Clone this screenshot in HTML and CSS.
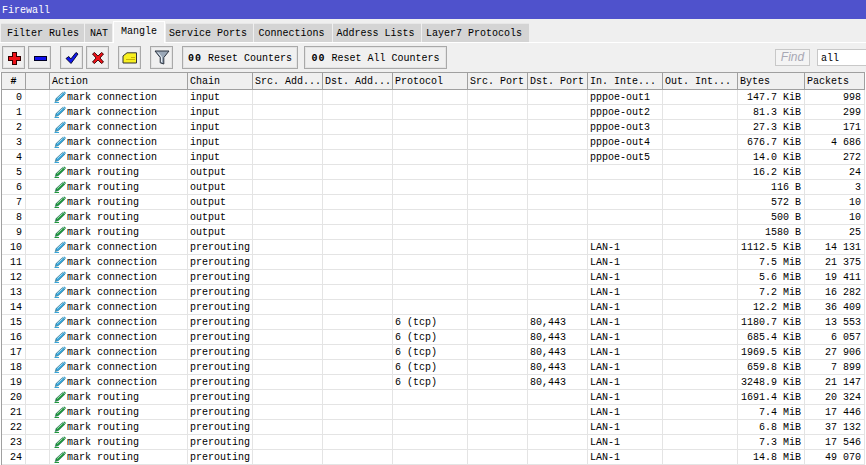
FILE: index.html
```html
<!DOCTYPE html>
<html lang="en">
<head>
<meta charset="utf-8">
<title>Firewall</title>
<link rel="stylesheet" href="styles.css">
</head>
<body>
<svg class="sprite" width="0" height="0" aria-hidden="true">
  <symbol id="pen" viewBox="0 0 14 12">
    <path d="M1.5 11.5 H6" stroke="currentColor" stroke-width="1"/>
    <path d="M2.2 10.6 L3 7.6 L9.6 1.4 L12 3.2 L5.2 9.8 Z" fill="currentColor" stroke="#0b3d4a" stroke-opacity=".55" stroke-width=".7"/>
    <path d="M4.2 7.6 L9.6 2.6" stroke="#fff" stroke-opacity=".6" stroke-width="1" fill="none"/>
    <path d="M10.2 1 L11.4 .6 L13 1.9 L12.4 3 Z" fill="currentColor"/>
  </symbol>
</svg>
<header class="titlebar">Firewall</header>
<nav class="tabs">
  <span class="tab t1">Filter Rules</span>
  <span class="tab t2">NAT</span>
  <span class="tab active t3">Mangle</span>
  <span class="tab t4">Service Ports</span>
  <span class="tab t5">Connections</span>
  <span class="tab t6">Address Lists</span>
  <span class="tab t7">Layer7 Protocols</span>
</nav>
<div class="toolbar">
  <button class="btn icon"><svg class="crisp" width="14" height="14" viewBox="0 0 14 14"><path d="M5 1 H9 V5 H13 V9 H9 V13 H5 V9 H1 V5 H5 Z" fill="#ee1118" stroke="#300" stroke-width="1"/></svg></button>
  <button class="btn icon gap-s"><svg class="crisp" width="14" height="14" viewBox="0 0 14 14"><rect x="1" y="5" width="12" height="4" fill="#1010ee" stroke="#002" stroke-width="1"/></svg></button>
  <button class="btn icon gap-l"><svg width="14" height="14" viewBox="0 0 14 14"><path d="M1 7.5 L3.8 5.5 L5.8 8 L11 1.5 L13 3 L6 12.5 Z" fill="#1018ee" stroke="#002" stroke-width=".9"/></svg></button>
  <button class="btn icon gap-s"><svg width="14" height="14" viewBox="0 0 14 14"><path d="M1.5 3 L3.5 1.5 L7 5 L10.5 1.5 L12.5 3 L9 7 L12.5 11 L10.5 12.5 L7 9 L3.5 12.5 L1.5 11 L5 7 Z" fill="#ee1118" stroke="#300" stroke-width=".9"/></svg></button>
  <button class="btn icon gap-l"><svg width="16" height="12" viewBox="0 0 16 12"><path d="M1 4 L5 .8 H14.5 V11 H1 Z" fill="#f8f020" stroke="#333" stroke-width="1"/><path d="M9 5.5 H13 M4 7.5 H13" stroke="#c9b400" stroke-width="1"/></svg></button>
  <button class="btn icon gap-l"><svg width="16" height="15" viewBox="0 0 16 15"><path d="M1 1 H15 L9.8 7.5 V14 L6.2 12.8 V7.5 Z" fill="#9aa8b8" stroke="#2c3440" stroke-width="1"/><path d="M4 2.5 L7.5 7 V12" stroke="#e6ecf2" stroke-width="1" fill="none"/></svg></button>
  <button class="btn text gap-l reset1"><b>00</b> Reset Counters</button>
  <button class="btn text gap-m reset2"><b>00</b> Reset All Counters</button>
  <span class="find">Find</span>
  <span class="filter">all</span>
</div>
<table class="rules">
  <colgroup>
    <col class="c24"><col class="c24"><col class="c138"><col class="c65"><col class="c70"><col class="c70"><col class="c75"><col class="c60"><col class="c60"><col class="c75"><col class="c75"><col class="c67"><col class="c60">
  </colgroup>
  <thead>
    <tr><th class="hash">#</th><th></th><th>Action</th><th>Chain</th><th>Src. Add...</th><th>Dst. Add...</th><th>Protocol</th><th>Src. Port</th><th>Dst. Port</th><th>In. Inte...</th><th>Out. Int...</th><th>Bytes</th><th>Packets</th></tr>
  </thead>
  <tbody>
    <tr><td class="r">0</td><td></td><td><svg class="pen conn"><use href="#pen"/></svg>mark connection</td><td>input</td><td></td><td></td><td></td><td></td><td></td><td>pppoe-out1</td><td></td><td class="r">147.7 KiB</td><td class="r">998</td></tr>
    <tr><td class="r">1</td><td></td><td><svg class="pen conn"><use href="#pen"/></svg>mark connection</td><td>input</td><td></td><td></td><td></td><td></td><td></td><td>pppoe-out2</td><td></td><td class="r">81.3 KiB</td><td class="r">299</td></tr>
    <tr><td class="r">2</td><td></td><td><svg class="pen conn"><use href="#pen"/></svg>mark connection</td><td>input</td><td></td><td></td><td></td><td></td><td></td><td>pppoe-out3</td><td></td><td class="r">27.3 KiB</td><td class="r">171</td></tr>
    <tr><td class="r">3</td><td></td><td><svg class="pen conn"><use href="#pen"/></svg>mark connection</td><td>input</td><td></td><td></td><td></td><td></td><td></td><td>pppoe-out4</td><td></td><td class="r">676.7 KiB</td><td class="r">4 686</td></tr>
    <tr><td class="r">4</td><td></td><td><svg class="pen conn"><use href="#pen"/></svg>mark connection</td><td>input</td><td></td><td></td><td></td><td></td><td></td><td>pppoe-out5</td><td></td><td class="r">14.0 KiB</td><td class="r">272</td></tr>
    <tr><td class="r">5</td><td></td><td><svg class="pen rout"><use href="#pen"/></svg>mark routing</td><td>output</td><td></td><td></td><td></td><td></td><td></td><td></td><td></td><td class="r">16.2 KiB</td><td class="r">24</td></tr>
    <tr><td class="r">6</td><td></td><td><svg class="pen rout"><use href="#pen"/></svg>mark routing</td><td>output</td><td></td><td></td><td></td><td></td><td></td><td></td><td></td><td class="r">116 B</td><td class="r">3</td></tr>
    <tr><td class="r">7</td><td></td><td><svg class="pen rout"><use href="#pen"/></svg>mark routing</td><td>output</td><td></td><td></td><td></td><td></td><td></td><td></td><td></td><td class="r">572 B</td><td class="r">10</td></tr>
    <tr><td class="r">8</td><td></td><td><svg class="pen rout"><use href="#pen"/></svg>mark routing</td><td>output</td><td></td><td></td><td></td><td></td><td></td><td></td><td></td><td class="r">500 B</td><td class="r">10</td></tr>
    <tr><td class="r">9</td><td></td><td><svg class="pen rout"><use href="#pen"/></svg>mark routing</td><td>output</td><td></td><td></td><td></td><td></td><td></td><td></td><td></td><td class="r">1580 B</td><td class="r">25</td></tr>
    <tr><td class="r">10</td><td></td><td><svg class="pen conn"><use href="#pen"/></svg>mark connection</td><td>prerouting</td><td></td><td></td><td></td><td></td><td></td><td>LAN-1</td><td></td><td class="r">1112.5 KiB</td><td class="r">14 131</td></tr>
    <tr><td class="r">11</td><td></td><td><svg class="pen conn"><use href="#pen"/></svg>mark connection</td><td>prerouting</td><td></td><td></td><td></td><td></td><td></td><td>LAN-1</td><td></td><td class="r">7.5 MiB</td><td class="r">21 375</td></tr>
    <tr><td class="r">12</td><td></td><td><svg class="pen conn"><use href="#pen"/></svg>mark connection</td><td>prerouting</td><td></td><td></td><td></td><td></td><td></td><td>LAN-1</td><td></td><td class="r">5.6 MiB</td><td class="r">19 411</td></tr>
    <tr><td class="r">13</td><td></td><td><svg class="pen conn"><use href="#pen"/></svg>mark connection</td><td>prerouting</td><td></td><td></td><td></td><td></td><td></td><td>LAN-1</td><td></td><td class="r">7.2 MiB</td><td class="r">16 282</td></tr>
    <tr><td class="r">14</td><td></td><td><svg class="pen conn"><use href="#pen"/></svg>mark connection</td><td>prerouting</td><td></td><td></td><td></td><td></td><td></td><td>LAN-1</td><td></td><td class="r">12.2 MiB</td><td class="r">36 409</td></tr>
    <tr><td class="r">15</td><td></td><td><svg class="pen conn"><use href="#pen"/></svg>mark connection</td><td>prerouting</td><td></td><td></td><td>6 (tcp)</td><td></td><td>80,443</td><td>LAN-1</td><td></td><td class="r">1180.7 KiB</td><td class="r">13 553</td></tr>
    <tr><td class="r">16</td><td></td><td><svg class="pen conn"><use href="#pen"/></svg>mark connection</td><td>prerouting</td><td></td><td></td><td>6 (tcp)</td><td></td><td>80,443</td><td>LAN-1</td><td></td><td class="r">685.4 KiB</td><td class="r">6 057</td></tr>
    <tr><td class="r">17</td><td></td><td><svg class="pen conn"><use href="#pen"/></svg>mark connection</td><td>prerouting</td><td></td><td></td><td>6 (tcp)</td><td></td><td>80,443</td><td>LAN-1</td><td></td><td class="r">1969.5 KiB</td><td class="r">27 906</td></tr>
    <tr><td class="r">18</td><td></td><td><svg class="pen conn"><use href="#pen"/></svg>mark connection</td><td>prerouting</td><td></td><td></td><td>6 (tcp)</td><td></td><td>80,443</td><td>LAN-1</td><td></td><td class="r">659.8 KiB</td><td class="r">7 899</td></tr>
    <tr><td class="r">19</td><td></td><td><svg class="pen conn"><use href="#pen"/></svg>mark connection</td><td>prerouting</td><td></td><td></td><td>6 (tcp)</td><td></td><td>80,443</td><td>LAN-1</td><td></td><td class="r">3248.9 KiB</td><td class="r">21 147</td></tr>
    <tr><td class="r">20</td><td></td><td><svg class="pen rout"><use href="#pen"/></svg>mark routing</td><td>prerouting</td><td></td><td></td><td></td><td></td><td></td><td>LAN-1</td><td></td><td class="r">1691.4 KiB</td><td class="r">20 324</td></tr>
    <tr><td class="r">21</td><td></td><td><svg class="pen rout"><use href="#pen"/></svg>mark routing</td><td>prerouting</td><td></td><td></td><td></td><td></td><td></td><td>LAN-1</td><td></td><td class="r">7.4 MiB</td><td class="r">17 446</td></tr>
    <tr><td class="r">22</td><td></td><td><svg class="pen rout"><use href="#pen"/></svg>mark routing</td><td>prerouting</td><td></td><td></td><td></td><td></td><td></td><td>LAN-1</td><td></td><td class="r">6.8 MiB</td><td class="r">37 132</td></tr>
    <tr><td class="r">23</td><td></td><td><svg class="pen rout"><use href="#pen"/></svg>mark routing</td><td>prerouting</td><td></td><td></td><td></td><td></td><td></td><td>LAN-1</td><td></td><td class="r">7.3 MiB</td><td class="r">17 546</td></tr>
    <tr><td class="r">24</td><td></td><td><svg class="pen rout"><use href="#pen"/></svg>mark routing</td><td>prerouting</td><td></td><td></td><td></td><td></td><td></td><td>LAN-1</td><td></td><td class="r">14.8 MiB</td><td class="r">49 070</td></tr>
  </tbody>
</table>
</body>
</html>
```
FILE: styles.css
```css
* { box-sizing: border-box; }
html, body { margin: 0; padding: 0; }
body {
  width: 866px;
  height: 465px;
  overflow: hidden;
  background: #fff;
  font-family: "Liberation Mono", monospace;
  font-size: 10px;
  color: #000;
}
.sprite { position: absolute; }
.crisp { shape-rendering: crispEdges; }

.titlebar {
  height: 19px;
  background: #4f52cc;
  color: #fff;
  padding: 4px 0 0 2px;
  line-height: 13px;
}

.tabs {
  height: 24px;
  background: #efefef;
  border-bottom: 1px solid #fff;
  display: flex;
  padding: 4px 0 0 1px;
  gap: 1px;
  align-items: flex-start;
}
.tab {
  height: 19px;
  background: #d4d4d4;
  border-top: 1px solid #e8e8e8;
  line-height: 20px;
  text-align: center;
  flex: none;
}
.tab.active {
  height: 22px;
  margin-top: -2px;
  background: #f0f0f0;
  border-top: 1px solid #fff;
  border-left: 1px solid #fff;
  border-right: 1px solid #fff;
  line-height: 19px;
}
.t1 { width: 83px; padding-left: 1px; }
.t2 { width: 27px; padding-left: 1px; }
.t3 { width: 52px; }
.t4 { width: 87px; padding-right: 3px; }
.t5 { width: 78px; padding-right: 3px; }
.t6 { width: 88px; padding-right: 3px; }
.t7 { width: 107px; padding-right: 3px; }

.toolbar {
  height: 29px;
  background: #f0f0f0;
  display: flex;
  align-items: flex-start;
  padding: 3px 0 0 2px;
}
.btn {
  height: 23px;
  border: 1px solid #a9a9a9;
  outline: 1px solid #e4e4e4;
  outline-offset: -2px;
  background: #f0f0f0;
  padding: 0;
  font: inherit;
  color: #000;
  display: flex;
  align-items: center;
  justify-content: center;
  flex: none;
}
.icon { width: 23px; }
.text { white-space: pre; padding-top: 2px; }
.text b { letter-spacing: 1px; }
.reset1 { width: 116px; }
.reset2 { width: 143px; }
.gap-s { margin-left: 3px; }
.gap-m { margin-left: 6px; }
.gap-l { margin-left: 9px; }
.find {
  margin: 3px 0 0 328px;
  width: 35px;
  height: 17px;
  border: 1px solid #c8c8c8;
  background: #f4f4f4;
  color: #a8a8b4;
  font-family: "Liberation Sans", sans-serif;
  font-size: 12px;
  font-style: italic;
  line-height: 15px;
  text-align: center;
  flex: none;
}
.filter {
  margin: 3px 0 0 7px;
  width: 50px;
  height: 17px;
  border: 1px solid #c8c8c8;
  border-right: 0;
  background: #fff;
  padding-left: 3px;
  line-height: 17px;
  flex: none;
}

.rules {
  border-collapse: separate;
  border-spacing: 0;
  table-layout: fixed;
  width: 864px;
  margin-left: 1px;
  border-left: 1px solid #a0a0a0;
}
.c24 { width: 24px; }
.c138 { width: 138px; }
.c65 { width: 65px; }
.c70 { width: 70px; }
.c75 { width: 75px; }
.c60 { width: 60px; }
.c67 { width: 67px; }

.rules th {
  height: 18px;
  padding: 0 0 0 2px;
  background: #f0f0f0;
  border-top: 1px solid #a0a0a0;
  border-bottom: 1px solid #a0a0a0;
  border-right: 1px solid #a0a0a0;
  font-weight: normal;
  text-align: left;
  line-height: 15px;
  white-space: nowrap;
  overflow: hidden;
}
.rules th.hash { text-align: center; padding: 0; font-weight: bold; }
.rules td {
  height: 15px;
  padding: 1px 0 0 2px;
  border-bottom: 1px solid #e4e4e4;
  border-right: 1px solid #e4e4e4;
  line-height: 13px;
  white-space: nowrap;
  overflow: hidden;
}
.rules td.r { text-align: right; padding: 1px 3px 0 0; }
.pen {
  width: 14px;
  height: 12px;
  margin: 0 0 0 1px;
  vertical-align: top;
}
.conn { color: #35a6da; }
.rout { color: #1f9a3c; }
```
